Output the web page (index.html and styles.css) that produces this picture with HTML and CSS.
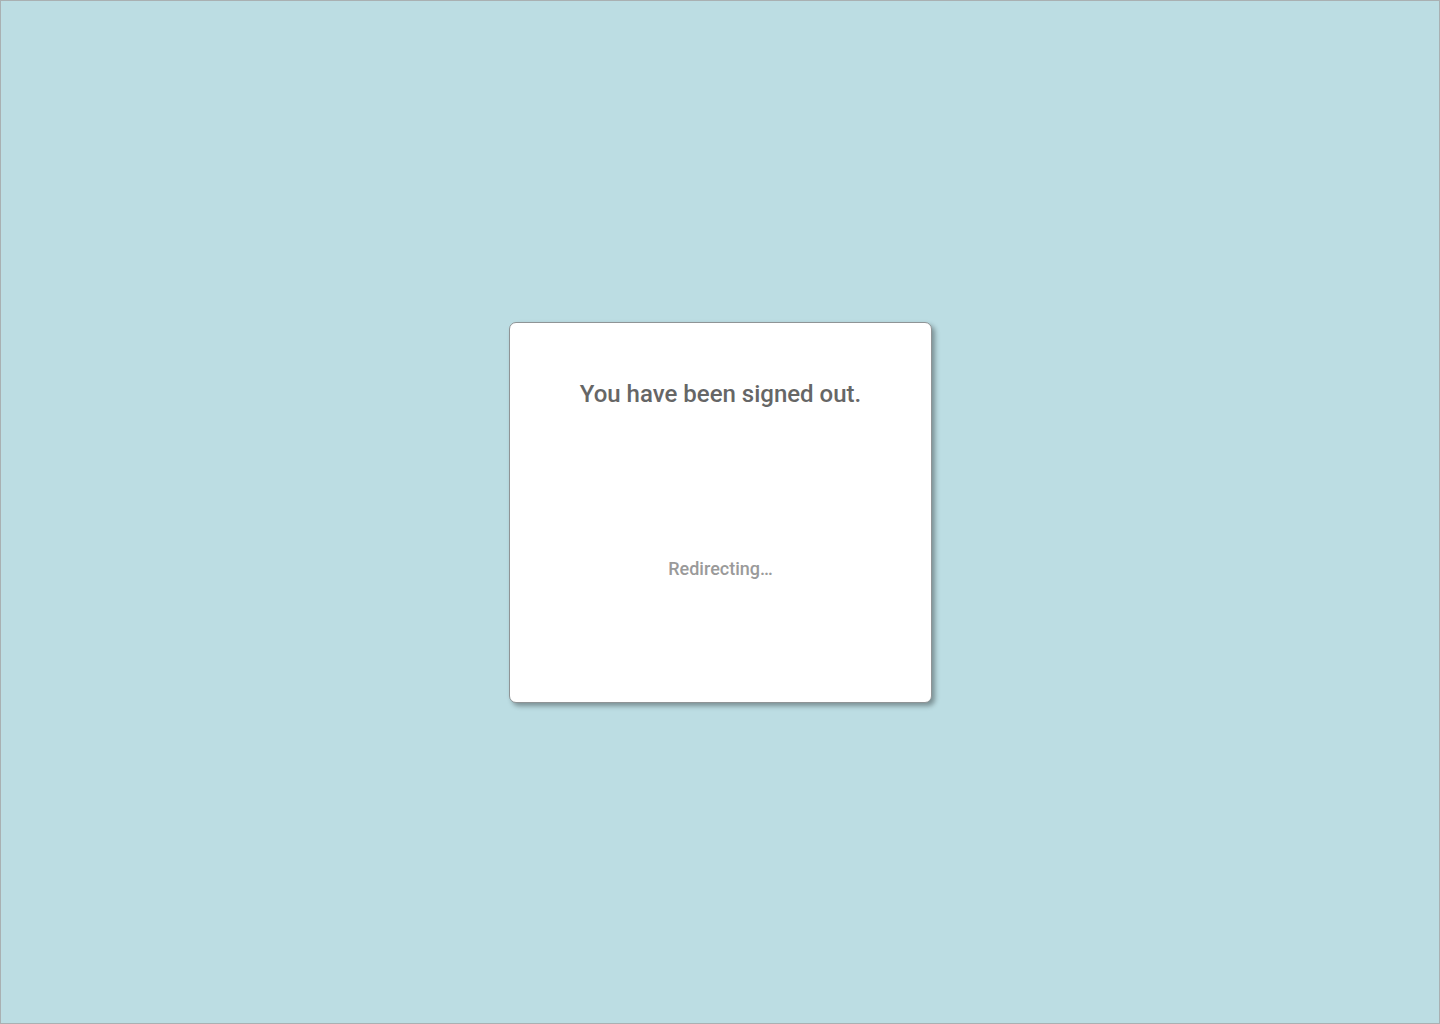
FILE: index.html
```html
<!DOCTYPE html>
<html lang="en">
<head>
<meta charset="utf-8">
<title>Signed out</title>
<link rel="stylesheet" href="styles.css">
</head>
<body>
<main class="page">
  <section class="card">
    <h1 class="title">You have been signed out.</h1>
    <p class="status">Redirecting…</p>
  </section>
</main>
</body>
</html>
```

FILE: styles.css
```css
html, body {
  margin: 0;
  padding: 0;
  height: 100%;
}
body {
  font-family: Roboto, "Liberation Sans", Arial, sans-serif;
  background: #bcdde3;
}
.page {
  box-sizing: border-box;
  height: 100vh;
  border: 1px solid #a9b0b2;
  background: #bcdde3;
  display: flex;
  align-items: center;
  justify-content: center;
}
.card {
  box-sizing: border-box;
  width: 423px;
  height: 381px;
  background: #ffffff;
  border: 1px solid #8f9496;
  border-radius: 7px;
  box-shadow: 3px 3px 5px rgba(0, 0, 0, 0.35);
  padding-top: 57px;
  text-align: center;
  margin-left: 1px;
  margin-top: 1px;
}
.title {
  margin: 0;
  font-size: 24px;
  line-height: 28px;
  font-weight: 500;
  color: #666666;
}
.status {
  margin: 150px 0 0;
  font-size: 18px;
  line-height: 22px;
  font-weight: 500;
  color: #9a9a9a;
}
```
